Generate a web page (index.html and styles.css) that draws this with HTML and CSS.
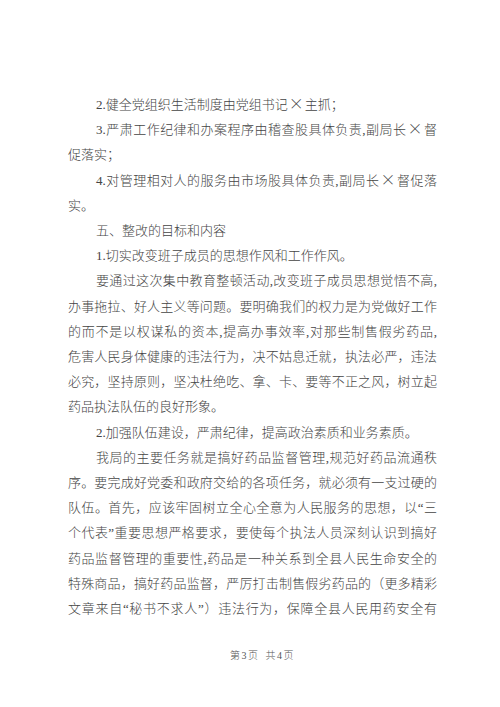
FILE: index.html
```html
<!DOCTYPE html>
<html lang="zh-CN">
<head>
    <meta charset="UTF-8">
    <meta name="viewport" content="width=device-width, initial-scale=1.0">
    <title>第3页</title>
    <link rel="stylesheet" href="styles.css">
</head>
<body>
    <div class="page">
        <div class="content">
            <p class="para">
                <span class="ln first end">2.健全党组织生活制度由党组书记<span class="x">×</span>主抓；</span>
            </p>
            <p class="para">
                <span class="ln first">3.严肃工作纪律和办案程序由稽查股具体负责,副局长<span class="x">×</span>督</span>
                <span class="ln end">促落实；</span>
            </p>
            <p class="para">
                <span class="ln first">4.对管理相对人的服务由市场股具体负责,副局长<span class="x">×</span>督促落</span>
                <span class="ln end">实。</span>
            </p>
            <p class="para">
                <span class="ln first end">五、整改的目标和内容</span>
            </p>
            <p class="para">
                <span class="ln first end">1.切实改变班子成员的思想作风和工作作风。</span>
            </p>
            <p class="para">
                <span class="ln first">要通过这次集中教育整顿活动,改变班子成员思想觉悟不高,</span>
                <span class="ln">办事拖拉、好人主义等问题。要明确我们的权力是为党做好工作</span>
                <span class="ln">的而不是以权谋私的资本,提高办事效率,对那些制售假劣药品,</span>
                <span class="ln">危害人民身体健康的违法行为，决不姑息迁就，执法必严，违法</span>
                <span class="ln">必究，坚持原则，坚决杜绝吃、拿、卡、要等不正之风，树立起</span>
                <span class="ln end">药品执法队伍的良好形象。</span>
            </p>
            <p class="para">
                <span class="ln first end">2.加强队伍建设，严肃纪律，提高政治素质和业务素质。</span>
            </p>
            <p class="para">
                <span class="ln first">我局的主要任务就是搞好药品监督管理,规范好药品流通秩</span>
                <span class="ln">序。要完成好党委和政府交给的各项任务，就必须有一支过硬的</span>
                <span class="ln">队伍。首先，应该牢固树立全心全意为人民服务的思想，以“三</span>
                <span class="ln">个代表”重要思想严格要求，要使每个执法人员深刻认识到搞好</span>
                <span class="ln">药品监督管理的重要性,药品是一种关系到全县人民生命安全的</span>
                <span class="ln">特殊商品，搞好药品监督，严厉打击制售假劣药品的（更多精彩</span>
                <span class="ln">文章来自“秘书不求人”）违法行为，保障全县人民用药安全有</span>
            </p>
        </div>
        <div class="footer">第3页 共4页</div>
    </div>
</body>
</html>
```

FILE: styles.css
```css
* {
    margin: 0;
    padding: 0;
    box-sizing: border-box;
}

body {
    background-color: #fff;
    color: #444;
    font-family: "Liberation Serif", "Noto Sans CJK SC", serif;
    font-weight: 300;
}

.page {
    width: 500px;
    height: 707px;
    padding-top: 92px;
}

.content {
    width: 369px;
    margin-left: 68px;
    font-size: 13px;
    line-height: 25.2px;
}

.ln {
    display: block;
    text-align: justify;
    text-align-last: justify;
}

.ln.first {
    padding-left: 28px;
}

.ln.end {
    text-align-last: left;
}

.x {
    font-family: "Noto Sans CJK SC", sans-serif;
    font-size: 15px;
    line-height: 1;
    margin: 0 1px;
}

.footer {
    margin-top: 25px;
    padding-left: 25px;
    text-align: center;
    font-size: 10px;
    line-height: 20px;
    letter-spacing: 1.5px;
    word-spacing: 2px;
    color: #555;
}
```
